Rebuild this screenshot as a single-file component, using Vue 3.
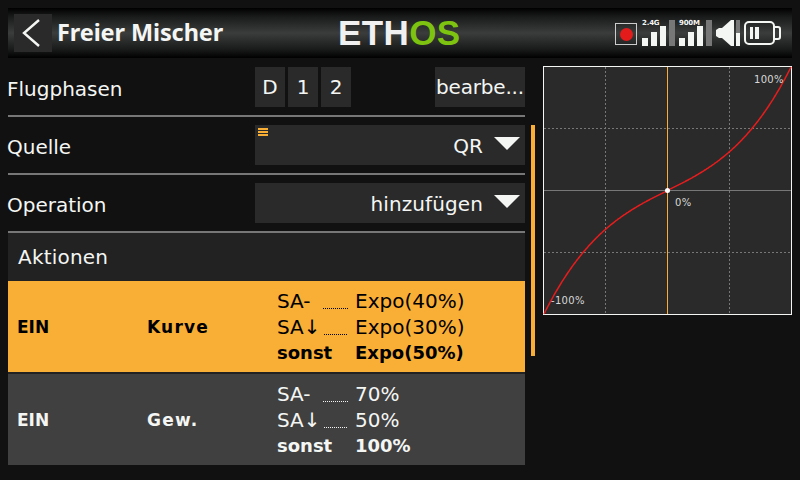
<template>
  <div class="screen">
    <header class="topbar">
      <button class="back-btn">
        <svg width="38" height="38" viewBox="0 0 38 38">
          <path d="M25 6 L10 19 L25 32" fill="none" stroke="#f4f6f4" stroke-width="2.4" />
        </svg>
      </button>
      <h1>Freier Mischer</h1>
      <div class="logo"><span>ETH</span><span class="logo-os">OS</span></div>
      <div class="status">
        <div class="record"><i></i></div>
        <div v-for="radio in radios" :key="radio" class="signal">
          <span class="signal-label">{{ radio }}</span>
          <b class="bar b1"></b>
          <b class="bar b2"></b>
          <b class="bar b3"></b>
          <b class="bar b4"></b>
        </div>
        <svg class="speaker" width="18" height="26" viewBox="0 0 18 26">
          <path d="M0 10 L3 8 L6 8 L15 0 L18 0 L18 26 L15 26 L6 18 L3 18 L0 16 Z" fill="#f4f6f4" />
        </svg>
        <div class="volume"><i></i></div>
        <svg class="battery" width="38" height="24" viewBox="0 0 38 24">
          <rect x="1" y="1" width="29" height="22" rx="4" fill="none" stroke="#f4f6f4" stroke-width="2" />
          <path d="M30 6 H34 Q36 6 36 8 V16 Q36 18 34 18 H30" fill="none" stroke="#f4f6f4" stroke-width="2" />
          <rect x="6" y="6" width="3" height="12" fill="#f4f6f4" />
          <rect x="11" y="6" width="4" height="12" fill="#f4f6f4" />
        </svg>
      </div>
    </header>

    <main class="content">
      <section class="form">
        <div class="field first">
          <label>Flugphasen</label>
          <div class="phases">
            <span v-for="p in phases" :key="p" class="phase">{{ p }}</span>
            <span class="edit">bearbe...</span>
          </div>
        </div>
        <div class="field">
          <label>Quelle</label>
          <div class="select">
            <span class="menu-mark"><i></i><i></i><i></i></span>
            <span class="value">QR</span>
            <em class="caret"></em>
          </div>
        </div>
        <div class="field">
          <label>Operation</label>
          <div class="select">
            <span class="value">hinzufügen</span>
            <em class="caret"></em>
          </div>
        </div>
        <div class="actions-head">Aktionen</div>
        <div v-for="row in actions" :key="row.type" class="action" :class="{ active: row.active }">
          <strong>EIN</strong>
          <strong class="action-type">{{ row.type }}</strong>
          <div class="action-lines">
            <div class="line">
              <span class="line-name">SA-<u class="leader"></u></span>
              <span>{{ row.values[0] }}</span>
            </div>
            <div class="line">
              <span class="line-name">SA↓<u class="leader short"></u></span>
              <span>{{ row.values[1] }}</span>
            </div>
            <div class="line bold">
              <span class="line-name">sonst</span>
              <span>{{ row.values[2] }}</span>
            </div>
          </div>
        </div>
      </section>

      <div class="scroll"></div>

      <svg class="graph" width="249" height="249" viewBox="0 0 249 249">
        <rect x="0.5" y="0.5" width="248" height="248" fill="#2a2a2a" stroke="#f4f6f4" />
        <g stroke="#777" stroke-dasharray="2 2" fill="none">
          <path d="M62.5 1 V248 M186.5 1 V248 M1 62.5 H248 M1 186.5 H248" />
        </g>
        <path d="M1 124.5 H248" stroke="#777" />
        <path d="M124.5 1 V248" stroke="#f9ae36" />
        <path :d="curve" fill="none" stroke="#e81c1c" stroke-width="1.5" />
        <circle cx="124.5" cy="124.5" r="2.5" fill="#fff" />
        <text x="211" y="17">100%</text>
        <text x="132" y="140">0%</text>
        <text x="8" y="238">-100%</text>
      </svg>
    </main>
  </div>
</template>

<script setup>
import { computed } from 'vue'

const radios = ['2.4G', '900M']
const phases = ['D', '1', '2']

const actions = [
  { type: 'Kurve', active: true, values: ['Expo(40%)', 'Expo(30%)', 'Expo(50%)'] },
  { type: 'Gew.', active: false, values: ['70%', '50%', '100%'] },
]

// expo 50% curve over the full graph
const curve = computed(() => {
  const points = []
  for (let px = 0; px <= 247; px++) {
    const x = (px - 123.5) / 123.5
    const y = 0.5 * x * x * x + 0.5 * x
    points.push(`${(px + 1).toFixed(1)} ${(124.5 - y * 123.5).toFixed(1)}`)
  }
  return 'M' + points.join(' L')
})
</script>

<style>
html,
body {
  margin: 0;
  background: #111;
}
</style>

<style scoped>
.screen {
  width: 800px;
  height: 480px;
  overflow: hidden;
  background: #111;
  color: #f4f6f4;
  font-family: "DejaVu Sans", sans-serif;
  padding: 8px 8px 0;
  box-sizing: border-box;
}

.topbar {
  position: relative;
  display: flex;
  align-items: center;
  height: 50px;
  padding-left: 6px;
  background: linear-gradient(#000 0%, #1a1c1b 18%, #3a3d3c 50%, #1a1c1b 82%, #000 100%);
}

.back-btn {
  width: 38px;
  height: 38px;
  padding: 0;
  border: none;
  background: #2a2a2a;
}

.back-btn svg {
  display: block;
}

.topbar h1 {
  margin: -2px 0 0 5px;
  font-family: "Noto Sans", sans-serif;
  font-size: 23.5px;
  font-weight: 700;
  letter-spacing: -0.1px;
}

.logo {
  position: absolute;
  left: 330px;
  top: 6px;
  font-family: "Liberation Sans", sans-serif;
  font-size: 35px;
  line-height: 38px;
  font-weight: 700;
  letter-spacing: 0.4px;
  color: #f0f0f0;
}

.logo-os {
  color: #7dc30f;
}

.status {
  display: flex;
  align-items: flex-end;
  margin-left: auto;
  margin-right: 10px;
  height: 26px;
}

.record {
  display: flex;
  align-items: center;
  justify-content: center;
  width: 20px;
  height: 20px;
  margin: 0 5px 1px 0;
  border: 1px solid #ccc;
}

.record i {
  width: 13px;
  height: 13px;
  border-radius: 50%;
  background: #e31b1b;
}

.signal {
  position: relative;
  display: flex;
  align-items: flex-end;
  gap: 3px;
  height: 26px;
  margin-right: 4px;
}

.signal-label {
  position: absolute;
  left: 0;
  top: -1px;
  font-size: 7px;
  line-height: 9px;
  font-weight: 700;
  letter-spacing: -0.2px;
}

.bar {
  width: 6px;
  background: #f4f6f4;
}

.b1 { height: 8px; }
.b2 { height: 14px; }
.b3 { height: 20px; }
.b4 { height: 26px; background: #777; }

.speaker {
  display: block;
}

.volume {
  display: flex;
  align-items: flex-end;
  width: 4px;
  height: 26px;
  margin-left: 2px;
  background: #777;
}

.volume i {
  width: 100%;
  height: 13px;
  background: #f4f6f4;
}

.battery {
  display: block;
  margin-left: 4px;
  margin-bottom: 1px;
}

.content {
  display: flex;
  align-items: flex-start;
  margin-top: 8px;
}

.form {
  width: 517px;
}

.field {
  display: flex;
  align-items: center;
  justify-content: space-between;
  box-sizing: border-box;
  height: 58px;
  padding: 8px 0;
  border-bottom: 2px solid #777;
  font-size: 20px;
}

.field.first {
  height: 51px;
  padding-top: 1px;
}

.field label {
  margin: 4px 0 0 -1px;
}

.phases {
  display: flex;
  gap: 3px;
  width: 270px;
}

.phase,
.edit {
  display: flex;
  align-items: center;
  justify-content: center;
  height: 40px;
  background: #2a2a2a;
}

.phase {
  width: 30px;
}

.edit {
  width: 90px;
  margin-left: auto;
  white-space: nowrap;
  letter-spacing: -0.2px;
}

.select {
  position: relative;
  display: flex;
  align-items: center;
  justify-content: flex-end;
  gap: 11px;
  box-sizing: border-box;
  width: 270px;
  height: 40px;
  padding-right: 5px;
  background: #2a2a2a;
}

.value {
  margin-top: 2px;
  letter-spacing: 0.1px;
}

.menu-mark {
  position: absolute;
  left: 3px;
  top: 3px;
  display: flex;
  flex-direction: column;
  gap: 1px;
}

.menu-mark i {
  width: 10px;
  height: 2px;
  background: #f9ae36;
}

.caret {
  width: 0;
  height: 0;
  margin-bottom: 4px;
  border-left: 13px solid transparent;
  border-right: 13px solid transparent;
  border-top: 13px solid #f4f6f4;
}

.actions-head {
  box-sizing: border-box;
  height: 48px;
  padding-left: 10px;
  background: #222;
  font-size: 20px;
  line-height: 48px;
  letter-spacing: 0.2px;
}

.action {
  display: grid;
  grid-template-columns: 130px 130px 1fr;
  align-items: center;
  box-sizing: border-box;
  height: 91px;
  padding-left: 9px;
  background: #404040;
  font-size: 20px;
}

.action.active {
  margin-bottom: 2px;
  background: #f9ae36;
  color: #000;
}

.action + .action {
  box-shadow: 0 -2px 0 #222;
}

.action strong {
  font-size: 17px;
}

.action strong.action-type {
  letter-spacing: 1.2px;
}

.line {
  display: flex;
  align-items: center;
  height: 25.5px;
}

.line.bold {
  font-size: 18px;
  font-weight: 700;
}

.line-name {
  position: relative;
  width: 78px;
}

.leader {
  position: absolute;
  left: 46px;
  bottom: 4px;
  width: 25px;
  border-bottom: 1px dotted currentColor;
}

.leader.short {
  left: 47px;
  width: 23px;
}

.scroll {
  width: 4px;
  height: 231px;
  margin: 59px 8px 0 6px;
  background: #f9ae36;
}

.graph {
  display: block;
}

.graph text {
  fill: #d8d8d8;
  font-size: 10px;
  letter-spacing: 0.3px;
}
</style>
